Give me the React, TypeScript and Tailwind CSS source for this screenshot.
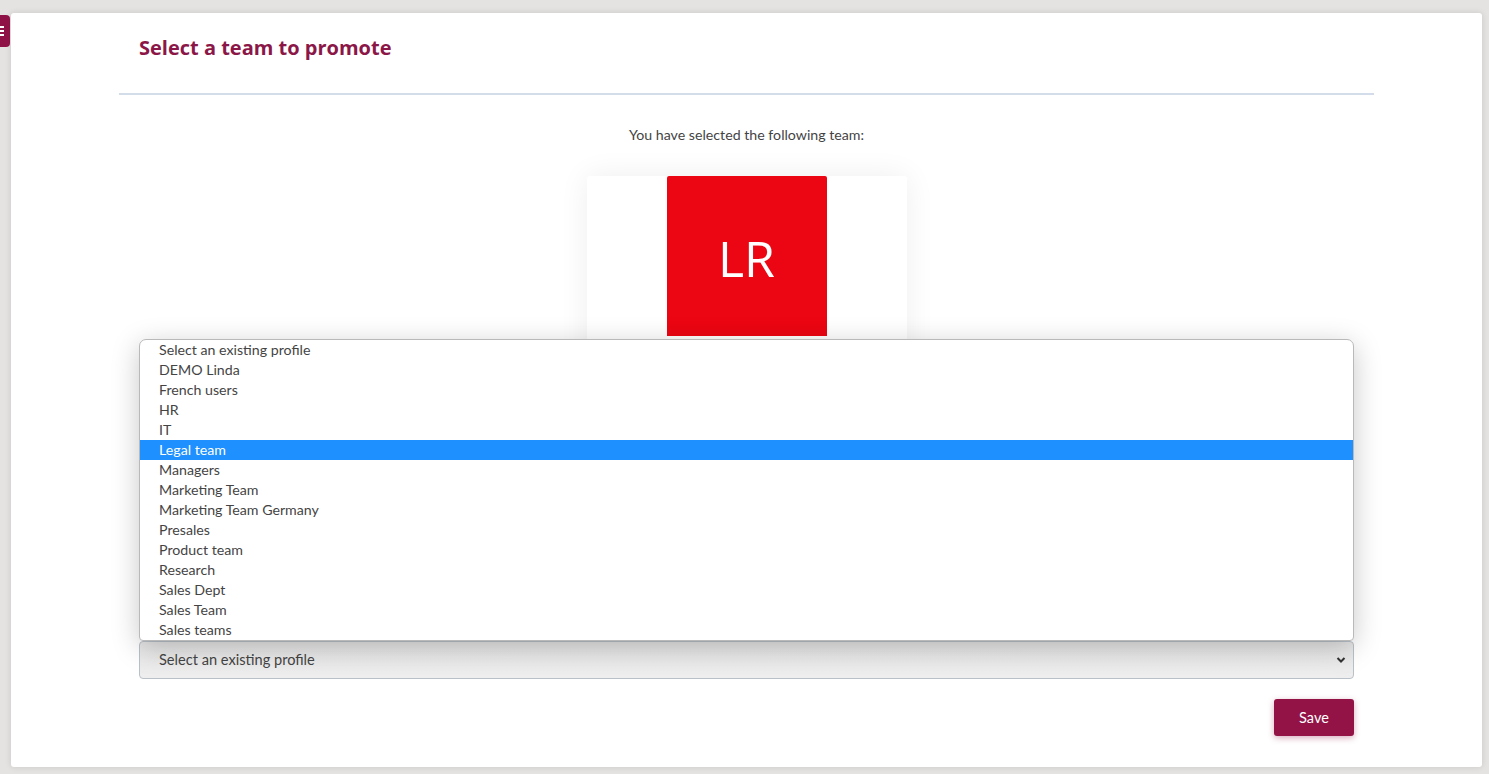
import React from "react";

const items = [
  "Select an existing profile",
  "DEMO Linda",
  "French users",
  "HR",
  "IT",
  "Legal team",
  "Managers",
  "Marketing Team",
  "Marketing Team Germany",
  "Presales",
  "Product team",
  "Research",
  "Sales Dept",
  "Sales Team",
  "Sales teams",
];

export default function App() {
  return (
    <div
      className="relative h-[774px] overflow-hidden bg-[#e4e3e1] pt-[13px] pl-[11px] pr-[7px] pb-[7px]"
      style={{ fontFamily: "Lato, 'Noto Sans', sans-serif" }}
    >
      {/* left side tab */}
      <div className="absolute left-0 top-[15px] z-10 flex h-[32px] w-[10px] flex-col items-start justify-center gap-[2px] rounded-r-[4px] bg-[#8f1246]">
        <span className="block h-[2px] w-[4px] bg-white" />
        <span className="block h-[2px] w-[4px] bg-white" />
        <span className="block h-[2px] w-[4px] bg-white" />
      </div>

      <div className="h-[754px] rounded-[3px] bg-white px-[108px] shadow-[0_0_6px_rgba(0,0,0,0.12)]">
        <div className="border-b-2 border-[#d3dde9] px-[20px] pt-[21px] pb-[31px]">
          <h1
            className="text-[20px] font-bold leading-[28px] text-[#8b1748]"
            style={{ fontFamily: "'Open Sans', sans-serif" }}
          >
            Select a team to promote
          </h1>
        </div>

        <div className="px-[20px]">
          <p className="mt-[30px] text-center text-[14.2px] leading-[20px] text-[#444]">
            You have selected the following team:
          </p>

          <div className="mx-auto mt-[31px] h-[240px] w-[320px] rounded-[3px] bg-white shadow-[0_0_30px_rgba(0,0,0,0.07)]">
            <div className="mx-auto flex h-[160px] w-[160px] items-center justify-center rounded-t-[2px] bg-[#ec0512] pt-[4px]">
              <span
                className="text-[50px] font-normal leading-none text-white"
                style={{ fontFamily: "'Open Sans', sans-serif" }}
              >
                LR
              </span>
            </div>
            <p className="mt-[20px] text-center text-[15px] text-[#444]">Legal team</p>
          </div>

          <div className="relative mt-[225px]">
            <div className="absolute bottom-full left-0 right-0 z-20 overflow-hidden rounded-t-[7px] rounded-b-[4px] border border-[#b9b9b9] bg-white shadow-[0_6px_28px_rgba(0,0,0,0.22)]">
              {items.map((it) => (
                <div
                  key={it}
                  className={
                    it === "Legal team"
                      ? "h-[20px] bg-[#1e90ff] pb-[1px] pl-[19px] text-[14.2px] leading-[19px] text-white"
                      : "h-[20px] pb-[1px] pl-[19px] text-[14.2px] leading-[19px] text-[#444]"
                  }
                >
                  {it}
                </div>
              ))}
            </div>

            <div className="flex h-[38px] items-center justify-between rounded-[4px] border border-[#b9c0c8] bg-gradient-to-b from-[#e6e6e6] to-[#eeeeee] pl-[19px] pr-[6px]">
              <span className="text-[14.6px] text-[#444]">Select an existing profile</span>
              <svg width="10" height="8" viewBox="0 0 10 8" className="mr-[1px]">
                <path d="M1.5 2 L5 5.5 L8.5 2" fill="none" stroke="#333" strokeWidth="2" />
              </svg>
            </div>
          </div>

          <div className="mt-[20px] flex justify-end">
            <button className="h-[37px] w-[80px] rounded-[3px] bg-[#931346] text-[14.5px] text-white shadow-[0_2px_6px_rgba(147,19,70,0.35)]">
              Save
            </button>
          </div>
        </div>
      </div>
    </div>
  );
}
